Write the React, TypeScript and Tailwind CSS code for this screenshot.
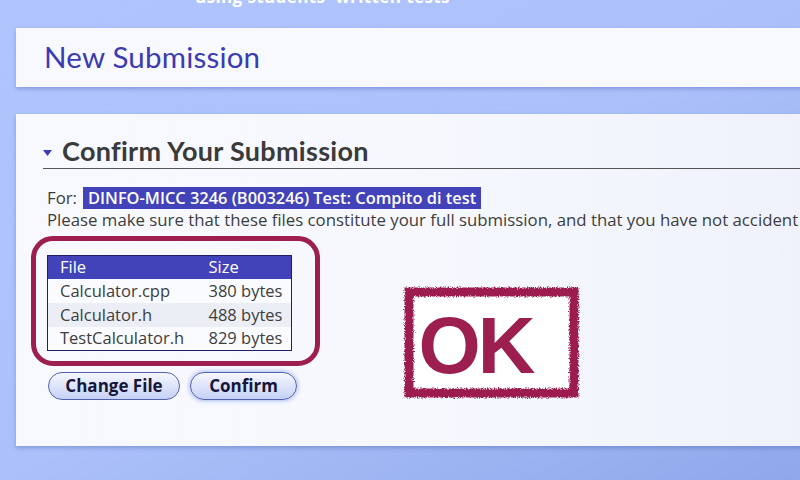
import React from "react"

const files = [
  { name: "Calculator.cpp", size: "380 bytes" },
  { name: "Calculator.h", size: "488 bytes" },
  { name: "TestCalculator.h", size: "829 bytes" },
]

function OkStamp() {
  return (
    <div className="relative w-[177px] h-[113px] flex items-center justify-center">
      <svg className="absolute inset-0" width="177" height="113" viewBox="0 0 177 113">
        <defs>
          <filter id="grunge" x="-10%" y="-10%" width="120%" height="120%">
            <feTurbulence type="fractalNoise" baseFrequency="0.9" numOctaves="2" seed="3" result="noise" />
            <feDisplacementMap in="SourceGraphic" in2="noise" scale="5" xChannelSelector="R" yChannelSelector="G" />
          </filter>
        </defs>
        <rect x="6" y="6" width="165" height="101" fill="#ffffff" stroke="#9c1f50" strokeWidth="9" filter="url(#grunge)" />
      </svg>
      <span
        className="relative font-bold text-[80px] leading-none tracking-[-3px] text-[#9c1f50] mt-[6px] -ml-[32px]"
        style={{ fontFamily: '"Liberation Sans", Arial, sans-serif' }}
      >
        OK
      </span>
    </div>
  )
}

export default function App() {
  return (
    <div
      className="w-[800px] h-[480px] overflow-hidden bg-gradient-to-br from-[#b0c5fd] via-[#acc1fa] to-[#8ea8ea] text-[#3d3d3d]"
      style={{ fontFamily: '"Open Sans", Lato, sans-serif' }}
    >
      <div className="h-[28px] overflow-hidden pl-[195px]">
        <div className="-mt-[13px] text-[17px] font-bold text-white leading-[20px] tracking-[0.4px]">
          using students' written tests
        </div>
      </div>

      <div className="ml-[16px] w-[800px] h-[59px] bg-[#f7f9fe] shadow-[0_2px_4px_rgba(60,80,160,0.35)] flex items-center pl-[28px]">
        <h1 className="text-[29.5px] text-[#3b3bb2] tracking-[0.2px]" style={{ fontFamily: 'Lato, sans-serif' }}>
          New Submission
        </h1>
      </div>

      <div className="mt-[27px] ml-[16px] w-[800px] h-[332px] bg-gradient-to-r from-[#f7f9fe] via-[#f6f8fe] to-[#eff2fb] shadow-[0_2px_4px_rgba(60,80,160,0.35)] pt-[20px]">
        <div className="ml-[27px] h-[35px] border-b border-[#555] flex items-center">
          <svg width="9" height="6" viewBox="0 0 9 6" className="mt-[4px]">
            <path d="M0 0 L9 0 L4.5 6 Z" fill="#3b3bb2" />
          </svg>
          <h2
            className="ml-[10px] text-[27px] font-bold text-[#3a3a3a] tracking-[0.3px]"
            style={{ fontFamily: 'Lato, sans-serif' }}
          >
            Confirm Your Submission
          </h2>
        </div>

        <div className="mt-[18px] ml-[31px] h-[22px] flex items-center text-[16.8px] whitespace-nowrap">
          <span>For:</span>
          <span className="ml-[6px] h-[22px] px-[5px] flex items-center bg-[#4343b9] text-white font-semibold text-[16.4px]">
            DINFO-MICC 3246 (B003246) Test: Compito di test
          </span>
        </div>
        <div className="ml-[31px] h-[22px] leading-[22px] text-[16.8px] whitespace-nowrap">
          Please make sure that these files constitute your full submission, and that you have not accident
        </div>

        <div className="flex">
          <div className="ml-[15px]">
            <div className="mt-[5px] w-[289px] h-[130px] border-[5px] border-[#9c1f50] rounded-[22px] pl-[11px] pt-[14px]">
              <table className="w-[245px] border border-[#1e2060] border-collapse text-[16.5px] leading-[20px]">
                <thead>
                  <tr className="bg-[#4343b9] text-white h-[23px]">
                    <th className="text-left font-normal pl-[12px] w-[161px] p-0">File</th>
                    <th className="text-left font-normal p-0">Size</th>
                  </tr>
                </thead>
                <tbody>
                  {files.map((f, i) => (
                    <tr key={f.name} className={`h-[24px] ${i === 1 ? "bg-[#eceef6]" : "bg-[#fafbff]"}`}>
                      <td className="pl-[12px] p-0">{f.name}</td>
                      <td className="p-0">{f.size}</td>
                    </tr>
                  ))}
                </tbody>
              </table>
            </div>
            <div className="mt-[6px] ml-[17px] flex gap-[10px]">
              <button className="w-[132px] h-[28px] rounded-full border border-[#5362ad] bg-gradient-to-b from-[#f6f8ff] to-[#c6d1f5] text-[17px] font-bold text-[#16163a]">
                Change File
              </button>
              <button className="w-[107px] h-[28px] rounded-full border border-[#5362ad] bg-gradient-to-b from-[#f6f8ff] to-[#c6d1f5] text-[17px] font-bold text-[#16163a] shadow-[0_0_5px_#8ca2ea]">
                Confirm
              </button>
            </div>
          </div>
          <div className="ml-[83px] mt-[55px]">
            <OkStamp />
          </div>
        </div>
      </div>
    </div>
  )
}
